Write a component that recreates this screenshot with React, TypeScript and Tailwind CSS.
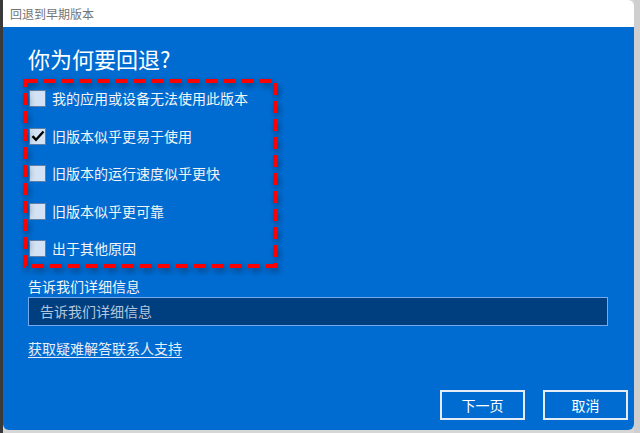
import React from "react";

const font = { fontFamily: '"Noto Sans CJK SC", "Noto Sans", sans-serif' };

const items = [
  { label: "我的应用或设备无法使用此版本", checked: false },
  { label: "旧版本似乎更易于使用", checked: true },
  { label: "旧版本的运行速度似乎更快", checked: false },
  { label: "旧版本似乎更可靠", checked: false },
  { label: "出于其他原因", checked: false },
];

function Checkbox({ checked }: { checked: boolean }) {
  return (
    <div className="w-[17px] h-[17px] bg-[#d3e2f4] border border-[#5f7fa6] flex items-center justify-center shrink-0">
      {checked && (
        <svg width="14" height="12" viewBox="0 0 14 12">
          <path d="M1.5 6.2 L5 9.8 L12.5 1.5" fill="none" stroke="#000" strokeWidth="2.4" />
        </svg>
      )}
    </div>
  );
}

export default function App() {
  return (
    <div className="w-[640px] h-[433px] bg-[#d6d6d6] flex overflow-hidden" style={font}>
      <div className="w-[3px] h-full bg-[#3a3a3a] shrink-0" />
      <div className="w-[631px] h-[430px] flex flex-col rounded-b-[6px] rounded-tr-[6px] overflow-hidden shrink-0">
        <div className="h-[27px] bg-white flex items-center pl-[7px] text-[12px] text-[#747474] shrink-0">
          回退到早期版本
        </div>
        <div className="flex-1 bg-[#006cd2] flex flex-col pl-[25px] text-[#f4f4f4]">
          <div className="mt-[16px] h-[30px] leading-[30px] text-[22px] text-white">你为何要回退?</div>
          <div className="relative ml-[-5px] mt-[6px] w-[254px] h-[189px] flex flex-col pl-[6px] pt-[1px]">
            <svg
              className="absolute inset-0 pointer-events-none"
              width="254"
              height="189"
              style={{ filter: "drop-shadow(2px 3px 3px rgba(0,0,0,0.45))" }}
            >
              <rect
                x="2"
                y="2"
                width="250"
                height="185"
                fill="none"
                stroke="#ff0000"
                strokeWidth="4"
                strokeDasharray="12 6"
              />
            </svg>
            {items.map((it) => (
              <div key={it.label} className="h-[37.5px] flex items-center gap-[6px] text-[14px]">
                <Checkbox checked={it.checked} />
                <span>{it.label}</span>
              </div>
            ))}
          </div>
          <div className="mt-[8px] h-[20px] leading-[20px] text-[14px]">告诉我们详细信息</div>
          <div className="mt-[1px] w-[580px] h-[29px] bg-[#003f7f] border-[1.5px] border-[#72aaf0] flex items-center pl-[11px] text-[14px] text-[#b6c6dc]">
            告诉我们详细信息
          </div>
          <div className="mt-[11px] h-[22px] leading-[22px] text-[14px] text-[#e8eef8]">
            <span className="underline underline-offset-[3px] decoration-[1px]">获取疑难解答联系人支持</span>
          </div>
          <div className="mt-[31px] flex gap-[18px] pl-[412px]">
            <button className="w-[85px] h-[30px] border-2 border-[#e6ecf5] text-[14px] text-white flex items-center justify-center">
              下一页
            </button>
            <button className="w-[85px] h-[30px] border-2 border-[#e6ecf5] text-[14px] text-white flex items-center justify-center">
              取消
            </button>
          </div>
        </div>
      </div>
      <div className="flex-1 h-full bg-[#cfcfcf]" />
    </div>
  );
}
